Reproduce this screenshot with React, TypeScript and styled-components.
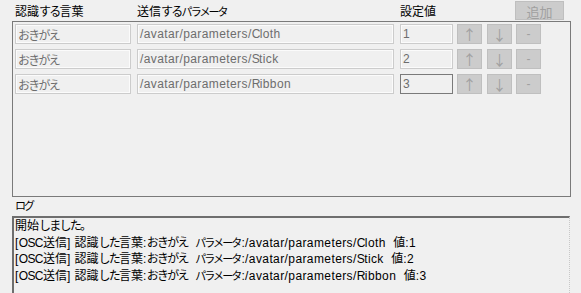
import React from "react";
import styled, { createGlobalStyle } from "styled-components";

const Global = createGlobalStyle`
  html, body { margin: 0; padding: 0; background: #f0f0f0; }
  body {
    font-family: "Liberation Sans", "Noto Sans CJK JP", sans-serif;
    font-size: 12px;
    letter-spacing: 0.4px;
    color: #000;
    overflow: hidden;
  }
`;

const Hira = styled.span`
  letter-spacing: -1.75px;
`;

const Kata = styled.span`
  font-size: 11px;
  letter-spacing: -1.9px;
  margin-right: 1px;
`;

const Kanji = styled.span`
  letter-spacing: 0;
`;

const Upper = styled.span`
  letter-spacing: -0.6px;
`;

function Txt({ children }: { children: string }) {
  const runs: { kind: string; text: string }[] = [];
  for (const ch of children) {
    const kind = /[\u3040-\u309F\u3002]/.test(ch)
      ? "h"
      : /[\u30A0-\u30FF]/.test(ch)
      ? "k"
      : /[\u4E00-\u9FFF]/.test(ch)
      ? "c"
      : /[A-Z]/.test(ch)
      ? "u"
      : "l";
    const last = runs[runs.length - 1];
    if (last && last.kind === kind) last.text += ch;
    else runs.push({ kind, text: ch });
  }
  return (
    <>
      {runs.map((r, i) =>
        r.kind === "h" ? (
          <Hira key={i}>{r.text}</Hira>
        ) : r.kind === "k" ? (
          <Kata key={i}>{r.text}</Kata>
        ) : r.kind === "c" ? (
          <Kanji key={i}>{r.text}</Kanji>
        ) : r.kind === "u" ? (
          <Upper key={i}>{r.text}</Upper>
        ) : (
          <React.Fragment key={i}>{r.text}</React.Fragment>
        )
      )}
    </>
  );
}

const Window = styled.div`
  width: 581px;
  height: 293px;
  display: flex;
  flex-direction: column;
  background: #f0f0f0;
`;

const HeaderRow = styled.div`
  height: 21px;
  display: flex;
  align-items: center;
  padding-left: 15px;
`;

const HeaderLabel = styled.div<{ $w: number }>`
  width: ${(p) => p.$w}px;
  line-height: 14px;
  padding-top: 2px;
  white-space: nowrap;
`;

const AddButton = styled.button`
  margin-left: 63px;
  width: 49px;
  height: 19px;
  align-self: flex-start;
  margin-top: 1px;
  background: #cccccc;
  border: 1px solid #bfbfbf;
  color: #a0a0a0;
  font: inherit;
  font-size: 13px;
  letter-spacing: 0;
  padding: 0;
`;

const Panel = styled.div`
  margin-left: 12px;
  width: 553px;
  height: 170px;
  border: 1px solid #7a7a7a;
  padding: 2px;
  display: flex;
  flex-direction: column;
  gap: 5px;
`;

const Row = styled.div`
  display: flex;
  height: 20px;
  align-items: stretch;
`;

const Field = styled.div<{ $w: number; $gap: number; $focus?: boolean }>`
  width: ${(p) => p.$w}px;
  margin-right: ${(p) => p.$gap}px;
  box-sizing: border-box;
  border: 1px solid ${(p) => (p.$focus ? "#7a7a7a" : "#cccccc")};
  box-shadow: ${(p) => (p.$focus ? "none" : "inset 0 0 0 1px #fbfbfb")};
  color: #6d6d6d;
  display: flex;
  align-items: center;
  padding-left: 2px;
  white-space: nowrap;
  overflow: hidden;
`;

const SmallButton = styled.div<{ $gap: number; $cjk?: boolean }>`
  width: 25px;
  box-sizing: border-box;
  margin-right: ${(p) => p.$gap}px;
  background: #cccccc;
  border: 1px solid #bfbfbf;
  color: #a0a0a0;
  display: flex;
  align-items: center;
  justify-content: center;
  font-family: ${(p) => (p.$cjk ? '"Noto Sans CJK JP", sans-serif' : '"Liberation Sans", sans-serif')};
  font-size: ${(p) => (p.$cjk ? 14 : 12)}px;
  letter-spacing: 0;
`;

const LogLabel = styled.div`
  padding-left: 15px;
  margin-top: 1px;
  height: 16px;
  line-height: 16px;
`;

const LogBox = styled.div`
  margin-top: 2px;
  margin-left: 12px;
  width: 558px;
  flex: 1;
  border-top: 2px solid #6e6e6e;
  border-left: 2px solid #6e6e6e;
  border-right: 1px dotted #c8c8c8;
  padding: 0 0 0 1px;
  box-sizing: border-box;
`;

const LogLine = styled.div`
  line-height: 16.5px;
  height: 16.5px;
  white-space: pre;
`;

const rows = [
  { word: "おきがえ", param: "/avatar/parameters/Cloth", value: "1" },
  { word: "おきがえ", param: "/avatar/parameters/Stick", value: "2" },
  { word: "おきがえ", param: "/avatar/parameters/Ribbon", value: "3" },
];

export default function App() {
  return (
    <Window>
      <Global />
      <HeaderRow>
        <HeaderLabel $w={122}><Txt>認識する言葉</Txt></HeaderLabel>
        <HeaderLabel $w={263}><Txt>送信するパラメータ</Txt></HeaderLabel>
        <HeaderLabel $w={52}><Txt>設定値</Txt></HeaderLabel>
        <AddButton>追加</AddButton>
      </HeaderRow>
      <Panel>
        {rows.map((r, i) => (
          <Row key={i}>
            <Field $w={116} $gap={6}><Txt>{r.word}</Txt></Field>
            <Field $w={257} $gap={6}><Txt>{r.param}</Txt></Field>
            <Field $w={53} $gap={4} $focus={i === 2}>{r.value}</Field>
            <SmallButton $gap={5} $cjk>↑</SmallButton>
            <SmallButton $gap={4} $cjk>↓</SmallButton>
            <SmallButton $gap={0}>-</SmallButton>
          </Row>
        ))}
      </Panel>
      <LogLabel><Txt>ログ</Txt></LogLabel>
      <LogBox>
        <LogLine><Txt>開始しました。</Txt></LogLine>
        {rows.map((r, i) => (
          <LogLine key={i}>
            <Txt>{`[OSC送信] 認識した言葉:${r.word}  パラメータ:${r.param}  値:${r.value}`}</Txt>
          </LogLine>
        ))}
      </LogBox>
    </Window>
  );
}
